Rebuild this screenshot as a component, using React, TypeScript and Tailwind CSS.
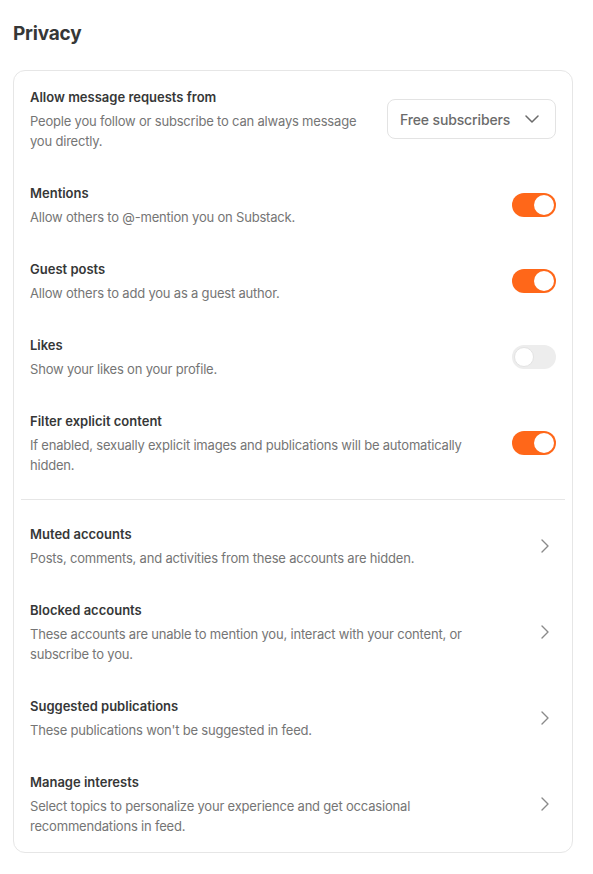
import { ChevronRight } from 'lucide-react'

type Row = {
    title: string
    desc: string
    control: 'select' | 'on' | 'off' | 'link'
}

const top: Row[] = [
    { title: 'Allow message requests from', desc: 'People you follow or subscribe to can always message you directly.', control: 'select' },
    { title: 'Mentions', desc: 'Allow others to @-mention you on Substack.', control: 'on' },
    { title: 'Guest posts', desc: 'Allow others to add you as a guest author.', control: 'on' },
    { title: 'Likes', desc: 'Show your likes on your profile.', control: 'off' },
    { title: 'Filter explicit content', desc: 'If enabled, sexually explicit images and publications will be automatically hidden.', control: 'on' },
]

const bottom: Row[] = [
    { title: 'Muted accounts', desc: 'Posts, comments, and activities from these accounts are hidden.', control: 'link' },
    { title: 'Blocked accounts', desc: 'These accounts are unable to mention you, interact with your content, or subscribe to you.', control: 'link' },
    { title: 'Suggested publications', desc: "These publications won't be suggested in feed.", control: 'link' },
    { title: 'Manage interests', desc: 'Select topics to personalize your experience and get occasional recommendations in feed.', control: 'link' },
]

function Toggle({ on }: { on: boolean }) {
    return (
        <div className={on ? 'flex h-[24px] w-[44px] shrink-0 items-center justify-end rounded-full bg-[#ff6719] px-[2px]' : 'flex h-[24px] w-[44px] shrink-0 items-center justify-start rounded-full bg-[#ededed] px-[2px]'}>
            <div className={on ? 'h-[20px] w-[20px] rounded-full bg-white' : 'h-[20px] w-[20px] rounded-full border border-[#e3e3e3] bg-white'} />
        </div>
    )
}

function Select() {
    return (
        <div className="flex h-[40px] w-[169px] shrink-0 items-center justify-between rounded-lg border border-[#e3e3e3] bg-white pl-[12px] pr-[16px]">
            <span className="text-[14px] font-medium tracking-[-0.01em] text-[#6b6b6b]">Free subscribers</span>
            <svg width="14" height="8" viewBox="0 0 14 8" fill="none">
                <path d="M1 1l6 6 6-6" stroke="#6b6b6b" strokeWidth="1.5" strokeLinecap="round" strokeLinejoin="round" />
            </svg>
        </div>
    )
}

function SettingRow({ row }: { row: Row }) {
    return (
        <div className="flex items-center justify-between gap-4 px-4 py-4">
            <div className="max-w-[456px] flex-1">
                <div className="text-[13px] font-semibold leading-[20px] text-[#363737]">{row.title}</div>
                <div className="mt-1 text-[13px] leading-[20px] tracking-[-0.015em] text-[#757575]">{row.desc}</div>
            </div>
            {row.control === 'select' && <Select />}
            {row.control === 'on' && <Toggle on />}
            {row.control === 'off' && <Toggle on={false} />}
            {row.control === 'link' && <ChevronRight size={24} strokeWidth={1.4} className="-mr-[1px] shrink-0 text-[#8a8a8a]" />}
        </div>
    )
}

export default function App() {
    return (
        <div className="min-h-screen bg-white px-[13px] pt-[20px] font-['Inter',sans-serif]">
            <h2 className="mb-[22px] text-[19px] font-bold leading-[28px] tracking-[-0.01em] text-[#363737]">Privacy</h2>
            <div className="w-[560px] rounded-xl border border-[#e6e6e6] bg-white">
                {top.map(row => (
                    <SettingRow key={row.title} row={row} />
                ))}
                <div className="mx-[7px] my-2 h-px bg-[#e6e6e6]" />
                {bottom.map(row => (
                    <SettingRow key={row.title} row={row} />
                ))}
            </div>
        </div>
    )
}
